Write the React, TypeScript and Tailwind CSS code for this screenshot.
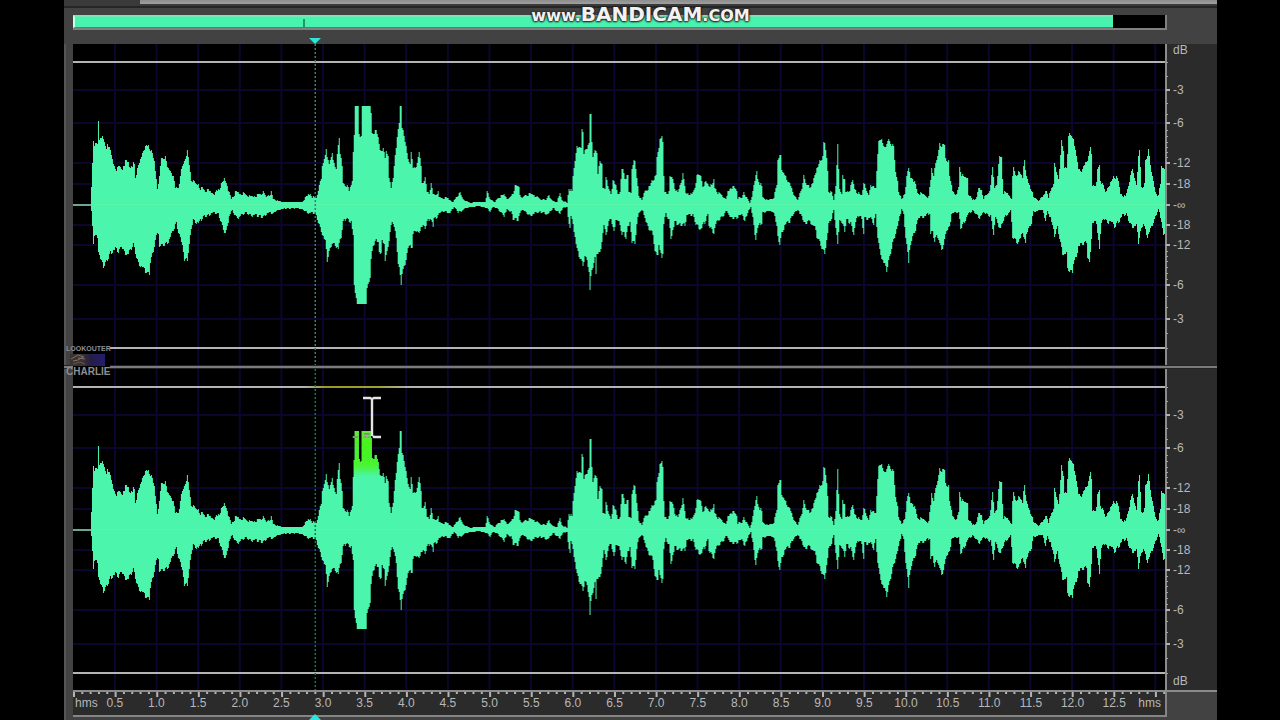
type ChannelProps = {
  name: string;
  highlight?: boolean;
};

// Geometry of one channel, in plot units
const PLOT_WIDTH = 1093;
const PLOT_HEIGHT = 321;
const MIDDLE = 161;
const PLAYHEAD = 242.5;

// Peaks above the zero line: "x,level"
const upperPeaks = `
18,0 18,18 20,65 21,60 24,60 25,83 26,83 26,66 29,71 30,65 33,56 34,62 37,53 40,42 43,36 46,39 49,36 51,37 52,44 55,44
56,40 59,37 60,43 62,38 62,28 64,35 67,45 70,56 75,60 78,53 81,43 83,27 84,18 86,28 88,47 92,47 94,37 98,34 100,28 102,17
106,19 108,35 111,45 114,54 116,40 118,25 123,20 125,22 127,17 134,14 142,12 147,18 149,21 151,26 154,21 156,12 158,6
162,12 169,12 177,8 187,11 190,12 193,8 198,13 200,6 204,4 210,3 220,3 229,3 232,7 237,12 239,8 243,7 245,15 248,25
249,38 251,47 253,58 254,47 256,41 259,53 260,43 263,35 264,52 266,69 267,53 269,38 270,22 274,18 276,13 279,25 280,55
281,72 282,99 285,99 286,72 288,67 289,99 297,99 298,92 299,72 303,73 305,67 307,56 310,56 312,47 313,54 316,48 316,25
318,16 320,28 322,52 324,67 326,82 327,99 328,99 329,78 331,67 333,58 335,47 337,43 338,52 340,37 344,40 346,52 348,40
349,23 352,27 354,13 356,12 358,20 360,10 363,10 365,16 366,7 374,7 380,3 384,9 387,11 390,6 397,2 405,3 412,3 414,12
417,6 422,3 425,7 431,10 436,6 440,12 442,18 446,19 447,11 450,7 452,10 460,11 467,6 473,5 476,12 478,5 484,3 487,11
489,5 494,2 496,17 499,12 500,28 502,45 504,61 506,57 508,57 509,76 511,73 511,52 514,55 516,63 517,91 518,91 519,65
520,47 522,55 524,53 525,32 527,42 529,40 530,18 532,18 533,30 535,18 538,12 540,23 543,19 545,12 547,15 549,35 550,36
552,27 555,28 556,12 558,13 559,37 561,47 562,43 564,27 566,10 569,4 572,15 577,18 579,25 583,28 584,47 586,58 587,67
589,71 590,62 591,28 592,13 596,12 597,27 600,27 602,18 605,12 607,20 609,26 610,30 612,18 613,11 615,13 619,10 622,18
624,28 628,30 630,20 633,23 636,20 639,18 641,25 642,18 646,12 650,9 653,5 655,13 658,19 660,18 664,15 665,7 669,7
671,14 674,7 677,2 680,12 682,23 684,35 685,27 689,18 690,8 695,4 701,8 704,20 705,45 707,51 708,48 709,33 713,30 716,22
719,17 722,8 725,5 728,16 730,21 731,29 733,22 735,21 737,15 740,23 742,32 745,37 747,45 750,47 751,61 752,61 754,48
755,35 756,15 759,12 761,5 763,20 764,38 765,59 766,35 767,15 769,12 770,32 772,25 773,12 777,15 780,24 782,17 787,10
789,10 791,23 793,15 796,10 798,22 800,18 803,17 804,35 805,52 806,62 809,65 811,60 814,60 816,66 819,60 821,57 823,32
825,25 826,15 829,5 832,12 834,27 836,36 838,28 840,28 843,20 845,12 852,10 856,8 858,25 859,37 861,30 863,40 865,48
867,63 869,60 872,60 873,47 876,43 877,27 880,15 884,10 886,18 887,38 889,30 891,27 895,28 896,12 900,5 904,7 906,16
909,16 911,7 915,11 918,18 920,37 922,18 924,22 926,40 927,48 929,48 930,27 931,12 935,11 939,7 940,28 941,37 943,30
946,32 950,28 951,40 952,47 954,28 956,22 959,15 961,7 966,5 970,8 973,15 976,7 978,15 981,23 982,41 984,33 986,27
988,48 989,63 991,53 992,38 994,39 996,68 997,71 1001,67 1002,57 1004,48 1006,37 1010,35 1013,43 1016,47 1018,57 1019,50
1020,20 1024,22 1025,35 1027,40 1028,25 1031,18 1033,12 1036,20 1039,23 1041,29 1044,27 1046,23 1048,12 1053,8 1056,20
1058,28 1060,35 1062,28 1064,22 1066,48 1067,54 1068,38 1069,18 1072,20 1073,43 1075,48 1076,57 1078,42 1080,28 1083,13
1086,9 1088,20 1089,38 1093,38`;

// Peaks below the zero line
const lowerPeaks = `
18,7 20,38 21,30 24,31 25,45 27,54 30,62 34,55 37,47 42,44 45,47 48,41 52,48 55,49 58,44 60,39 62,48 65,58 69,62 72,67
76,69 77,57 80,45 83,30 85,31 86,41 90,40 95,36 99,28 103,18 105,27 109,38 111,56 114,55 116,40 118,23 120,15 126,18
130,12 139,8 145,9 148,18 152,28 155,20 156,10 159,5 162,11 166,12 172,8 179,10 189,12 194,8 200,9 203,5 220,3 229,4
235,8 240,9 242,8 245,17 249,28 252,37 254,56 256,47 259,38 262,39 265,44 268,32 270,17 273,13 278,16 280,32 281,82
283,93 284,99 293,99 294,85 297,72 298,55 300,40 303,35 305,35 306,47 308,50 309,37 311,38 312,57 314,45 316,37 318,18
319,15 321,22 323,35 325,58 326,63 328,79 329,68 332,58 335,43 339,42 340,30 342,25 345,28 348,22 352,23 354,17 357,13
360,20 361,11 364,15 366,8 372,6 377,8 381,2 385,7 394,3 404,1 414,3 417,6 420,2 425,4 431,10 434,5 438,7 440,14 445,14
447,8 450,5 454,8 457,10 467,7 476,9 480,3 487,8 490,3 494,2 495,13 497,22 498,12 500,17 502,32 504,45 506,51 510,60
512,52 514,53 516,67 517,85 518,73 520,62 522,53 523,70 524,48 527,48 529,35 531,20 533,32 535,20 538,13 541,27 543,13
546,18 549,29 551,28 553,33 555,22 557,15 559,38 562,38 564,20 566,7 570,5 573,17 575,23 580,29 582,47 585,48 586,40
589,55 590,48 591,18 593,9 596,15 598,32 600,25 602,18 606,20 612,19 614,10 620,10 623,19 628,24 632,18 635,10 636,20
641,27 643,19 648,13 651,10 654,5 658,14 664,13 669,8 672,18 674,10 678,2 680,13 682,28 683,33 685,23 689,18 690,8
697,5 702,10 704,22 705,32 707,39 709,28 712,20 717,17 721,8 725,4 729,13 733,20 735,15 739,18 742,23 744,32 747,37
749,43 752,47 754,35 756,20 759,13 761,5 763,22 765,40 766,25 767,13 769,18 772,26 774,15 778,18 781,28 783,17 787,10
789,15 791,28 792,13 797,13 801,19 803,10 805,32 807,45 810,55 814,66 817,52 820,38 823,27 826,18 829,4 831,10 833,32
836,56 837,43 840,33 843,25 846,12 852,11 857,9 858,30 860,25 862,38 864,28 867,38 869,47 872,35 874,25 877,22 879,8
886,8 888,23 891,18 895,10 900,6 907,12 912,8 918,11 921,28 923,12 925,20 928,24 930,17 933,10 938,6 940,32 944,37
946,38 949,27 950,28 953,40 954,28 957,22 959,18 961,6 970,5 973,15 975,6 978,12 980,22 982,31 985,22 987,33 990,48
994,49 995,65 1000,67 1001,58 1004,50 1006,41 1011,39 1014,37 1015,52 1017,58 1018,45 1020,18 1024,18 1025,27 1027,45
1028,28 1029,17 1033,12 1036,21 1038,15 1042,22 1045,17 1050,11 1054,9 1057,17 1060,21 1064,21 1066,38 1068,27 1071,18
1075,31 1079,23 1082,15 1086,4 1089,15 1091,30 1093,33`;

function parsePeaks(text: string) {
  return text
    .trim()
    .split(/\s+/)
    .map((pair) => pair.split(",").map(Number));
}

function levelAt(peaks: number[][], x: number) {
  const next = peaks.findIndex(([px]) => px > x);
  if (next === -1) return peaks[peaks.length - 1][1];
  if (next === 0) return peaks[0][1];
  const [x0, y0] = peaks[next - 1];
  const [x1, y1] = peaks[next];
  return y0 + ((y1 - y0) * (x - x0)) / (x1 - x0);
}

// One column per unit, with a little ripple between neighbours
function columnsOf(text: string, seed: number) {
  const peaks = parsePeaks(text);
  const columns: { x: number; level: number }[] = [];
  for (let x = 18; x < PLOT_WIDTH; x += 1) {
    const level = levelAt(peaks, x);
    const ripple = ((Math.floor(x / 2) * seed) % 7) - 3;
    const amount = level > 90 ? 0 : Math.min(1, level / 14);
    columns.push({ x, level: Math.max(1, Math.round(level + ripple * amount * 0.7)) });
  }
  return columns;
}

const wavePoints = [
  ...columnsOf(upperPeaks, 5).map(
    ({ x, level }) => `${x},${MIDDLE - level} ${x + 1},${MIDDLE - level}`,
  ),
  ...columnsOf(lowerPeaks, 11)
    .reverse()
    .map(({ x, level }) => `${x + 1},${MIDDLE + level} ${x},${MIDDLE + level}`),
].join(" ");

const seconds = Array.from({ length: 25 }, (_, i) => ((i + 1) / 2).toFixed(1));
const gridColumns = Array.from({ length: 26 }, (_, i) => 42 + i * 41.65);
const gridRows = [46, 79, 119, 140, 181, 201, 241, 275];
const minorLevels = [
  32, 59, 70, 86, 92, 98, 103, 108, 113, 207, 212, 217, 223, 229, 235, 252, 263, 289,
];

const topScale = [
  { label: "dB", size: "h-10" },
  { label: "-3", size: "h-[33px]" },
  { label: "-6", size: "h-10" },
  { label: "-12", size: "h-[21px]" },
  { label: "-18", size: "h-[21px]" },
  { label: "-∞", size: "h-5" },
  { label: "-18", size: "h-5" },
  { label: "-12", size: "h-10" },
  { label: "-6", size: "h-[34px]" },
  { label: "-3", size: "h-3" },
];

const bottomScale = [
  { label: "", size: "h-10" },
  ...topScale.slice(1, 9),
  { label: "-3", size: "h-[37px]" },
  { label: "dB", size: "h-3" },
];

const Waveform = ({ name, highlight }: ChannelProps) => {
  return (
    <svg
      role="img"
      aria-label={name}
      viewBox={`0 0 ${PLOT_WIDTH} ${PLOT_HEIGHT}`}
      preserveAspectRatio="none"
      className="block h-full min-w-0 flex-1 bg-black"
    >
      <g stroke="#0c062d" strokeWidth="2">
        {gridColumns.map((x) => (
          <line key={x} x1={x} x2={x} y1="0" y2={PLOT_HEIGHT} />
        ))}
        {gridRows.map((y) => (
          <line key={y} x1="0" x2={PLOT_WIDTH} y1={y} y2={y} />
        ))}
      </g>
      <rect x="0" y="17" width={PLOT_WIDTH} height="2" fill="#b4b4b4" />
      <rect x="0" y="303" width={PLOT_WIDTH} height="2" fill="#b4b4b4" />
      <rect x="0" y="160" width="20" height="2" fill="#6aa890" />
      <polygon points={wavePoints} fill="#4bf5ab" />
      <rect x="20" y="160" width="1073" height="1" fill="#62f7a2" opacity="0.7" />
      {highlight && (
        <>
          <defs>
            <linearGradient id="hot" x1="0" x2="0" y1="0" y2="1">
              <stop offset="0" stopColor="#6fe83c" />
              <stop offset="0.3" stopColor="#46f41c" />
              <stop offset="0.75" stopColor="#4af430" />
              <stop offset="1" stopColor="#4bf5ab" />
            </linearGradient>
            <linearGradient id="warm">
              <stop offset="0" stopColor="#9a9a22" stopOpacity="0" />
              <stop offset="0.2" stopColor="#9a9a22" />
              <stop offset="0.7" stopColor="#a0a030" />
              <stop offset="1" stopColor="#a0a030" stopOpacity="0" />
            </linearGradient>
            <clipPath id="wave">
              <polygon points={wavePoints} />
            </clipPath>
          </defs>
          <rect x="278" y="60" width="28" height="48" fill="url(#hot)" clipPath="url(#wave)" />
          <rect x="232" y="17" width="105" height="2" fill="url(#warm)" />
          <path d="M280 68h5M291 65h6M292 68h4" stroke="#7b9a68" strokeWidth="2" />
        </>
      )}
      <line
        x1={PLAYHEAD}
        x2={PLAYHEAD}
        y1="0"
        y2={PLOT_HEIGHT}
        stroke={highlight ? "#0c7a45" : "#3f7d72"}
        strokeWidth="1.5"
        strokeDasharray="2 2"
      />
    </svg>
  );
};

const LevelScale = ({ scale }: { scale: { label: string; size: string }[] }) => {
  return (
    <div className="flex w-[52px] shrink-0 bg-[#2b2b2b]">
      <svg viewBox="0 0 6 321" className="block h-[321px] w-1.5" aria-hidden="true">
        <rect x="0" y="0" width="2" height="321" fill="#8b8b8b" />
        {[...gridRows, 161].map((y) => (
          <rect key={y} x="1" y={y - 1} width="4" height="2" fill="#b0b0b0" />
        ))}
        {[18, ...minorLevels, 304].map((y) => (
          <rect key={y} x="1" y={y} width="2" height="1" fill="#a0a0a0" />
        ))}
      </svg>
      <ul className="flex-1 pl-0.5 text-xs leading-3 text-[#b8b8b8]">
        {scale.map((item, i) => (
          <li key={i} className={item.size}>
            {item.label}
          </li>
        ))}
      </ul>
    </div>
  );
};

const TimeRuler = () => {
  const ticks = Array.from({ length: 132 }, (_, i) => i);

  return (
    <div className="flex h-[30px] border-t-2 border-[#8b8b8b]">
      <div className="min-w-0 flex-1">
        <div className="h-[25px] border-b-2 border-[#858585] bg-[#2b2b2b]">
          <svg
            viewBox="0 0 1093 5"
            preserveAspectRatio="none"
            className="block h-[5px] w-full"
            aria-hidden="true"
          >
            {ticks.map((i) => (
              <rect
                key={i}
                x={i * 8.33}
                y="0"
                width="2"
                height={i % 5 === 0 ? 5 : 2}
                fill="#b4b4b4"
              />
            ))}
          </svg>
          <div className="flex text-xs leading-3 text-[#b8b8b8]">
            <span className="w-[21px] shrink-0 pl-0.5">hms</span>
            {seconds.map((second) => (
              <span key={second} className="flex-1 text-center">
                {second}
              </span>
            ))}
            <span className="w-[30px] shrink-0 pr-1 text-right">hms</span>
          </div>
        </div>
      </div>
      <div className="w-[52px] shrink-0">
        <div className="h-[25px] w-0.5 bg-[#858585]" />
      </div>
    </div>
  );
};

const Overview = () => {
  return (
    <div className="mr-[50px] ml-[9px] flex h-[15px] border-r-2 border-b-2 border-[#808080] bg-black">
      <div className="relative w-[95.2%] border-t-2 border-b border-l-2 border-t-[#74e8b4] border-b-[#35936b] border-l-[#c8ffe6] bg-[#48f3b0]">
        <span className="absolute top-0.5 left-[22%] h-2 w-0.5 bg-[#1f9668]" />
      </div>
    </div>
  );
};

const Cursor = () => {
  return (
    <svg
      viewBox="0 0 20 44"
      className="absolute top-[26px] left-[27.4%] h-11 w-5 -translate-x-1/2"
      aria-hidden="true"
    >
      <path
        d="M1 3h7l2 1 2-1h7M10 4v37M11 41l1 1h7"
        fill="none"
        stroke="#e4e4e4"
        strokeWidth="2.4"
      />
      <path d="M1 42h7" stroke="#9aa68e" strokeWidth="2" strokeDasharray="2 1" />
    </svg>
  );
};

const Watermark = () => {
  return (
    <div className="absolute top-[300px] left-0.5 w-11 text-[#8f8f8f]">
      <div className="absolute inset-y-0 right-0 left-[7px] bg-black" />
      <div className="relative">
        <p className="text-[7px] leading-[10px] font-bold">LOOKOUTER</p>
        <svg viewBox="0 0 40 12" className="block h-3 w-10" aria-hidden="true">
          <defs>
            <linearGradient id="thumb">
              <stop offset="0" stopColor="#3a322e" />
              <stop offset="0.35" stopColor="#3c3236" />
              <stop offset="0.6" stopColor="#241d46" />
              <stop offset="1" stopColor="#241d70" />
            </linearGradient>
          </defs>
          <rect x="4" y="0" width="35" height="12" fill="url(#thumb)" />
          <path d="M5 5l7-4 6 2M7 7l5-1 5-3M12 4l7 1" fill="none" stroke="#777566" />
          <path d="M7 10l7-2 5 2" fill="none" stroke="#72533f" />
        </svg>
        <p className="text-[10px] leading-3 font-bold">CHARLIE</p>
      </div>
    </div>
  );
};

const App = () => {
  return (
    <div className="min-h-screen overflow-hidden bg-black pr-[63px] pl-16 font-['Liberation_Sans',Arial,sans-serif]">
      <main className="relative bg-[#424242]">
        <div className="flex h-2 border-b-2 border-[#252525] bg-[#3a3a3a]">
          <div className="ml-[76px] h-1 flex-1 bg-linear-to-b from-[#8d8d8d] to-[#a0a0a0]" />
        </div>
        <div className="h-[7px]" />
        <Overview />
        <div className="mr-[52px] ml-[9px] flex h-3.5 items-end">
          <div className="relative h-1.5 flex-1">
            <svg
              viewBox="0 0 12 6"
              className="absolute left-[22.2%] h-1.5 w-3 -translate-x-1/2"
              aria-hidden="true"
            >
              <path d="M0 0h12L6 6z" fill="#2de6d5" />
            </svg>
          </div>
        </div>

        <div className="relative">
          <div className="border-l-2 border-[#555555] pl-[7px]">
            <div className="flex h-[321px]">
              <Waveform name="Left channel" />
              <LevelScale scale={topScale} />
            </div>
          </div>
          <div className="flex h-1 flex-col justify-center bg-[#242424]">
            <div className="h-0.5 bg-[#7b7b7e]" />
          </div>
          <div className="relative border-l-2 border-[#555555] pl-[7px]">
            <div className="flex h-[321px]">
              <Waveform name="Right channel" highlight />
              <LevelScale scale={bottomScale} />
            </div>
            <div className="absolute inset-y-0 right-[52px] left-[7px]">
              <Cursor />
            </div>
          </div>
          <Watermark />
        </div>

        <div className="border-l-2 border-[#555555] pl-[7px]">
          <TimeRuler />
        </div>
        <svg
          viewBox="0 0 12 6"
          className="absolute bottom-0 left-[21.8%] h-1.5 w-3 -translate-x-1/2"
          aria-hidden="true"
        >
          <path d="M0 6h12L6 0z" fill="#2de6e0" />
        </svg>

        <p className="absolute top-1 left-1/2 -translate-x-1/2 font-['DejaVu_Sans',sans-serif] text-[20px] leading-5 font-bold whitespace-nowrap text-[#f2f2f2] [text-shadow:0_1px_2px_#222,1px_0_2px_#222,-1px_0_2px_#222]">
          <span className="text-base leading-5">www.</span>
          BANDICAM
          <span className="text-base leading-5">.COM</span>
        </p>
      </main>
    </div>
  );
};

export default App;
